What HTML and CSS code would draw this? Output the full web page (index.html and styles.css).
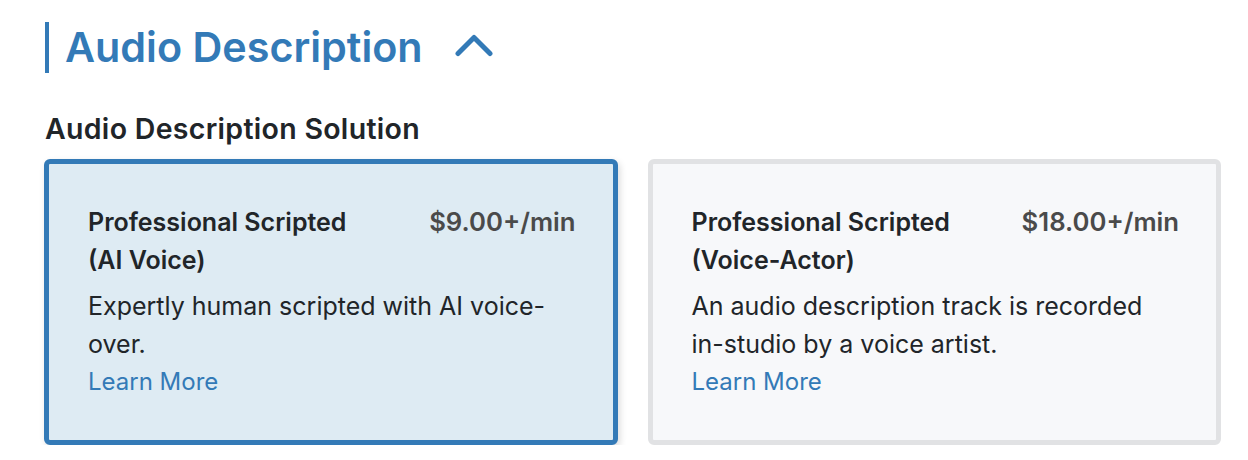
FILE: index.html
```html
<!DOCTYPE html>
<html lang="en">
<head>
<meta charset="utf-8">
<title>Audio Description</title>
<link rel="stylesheet" href="styles.css">
</head>
<body>
<section class="section">
  <header class="section-header">
    <h2 class="section-title">Audio Description</h2>
    <button class="toggle" aria-label="Collapse">
      <svg width="40" height="24" viewBox="0 0 40 24" aria-hidden="true">
        <polyline points="4,20.5 20,4.5 36,20.5" fill="none" stroke="#337ab7" stroke-width="5" stroke-linecap="round" stroke-linejoin="round"/>
      </svg>
    </button>
  </header>
  <h3 class="group-title">Audio Description Solution</h3>
  <div class="options">
    <div class="option option-selected">
      <div class="option-head">
        <div class="option-name">Professional Scripted (AI Voice)</div>
        <div class="option-price">$9.00+/min</div>
      </div>
      <p class="option-desc">Expertly human scripted with AI voice-over.</p>
      <a class="option-link" href="#">Learn More</a>
    </div>
    <div class="option">
      <div class="option-head">
        <div class="option-name">Professional Scripted (Voice-Actor)</div>
        <div class="option-price">$18.00+/min</div>
      </div>
      <p class="option-desc">An audio description track is recorded in-studio by a voice artist.</p>
      <a class="option-link" href="#">Learn More</a>
    </div>
  </div>
</section>
</body>
</html>
```
FILE: styles.css
```css
html, body {
  margin: 0;
  padding: 0;
  background: #ffffff;
}
body {
  font-family: Inter, "Noto Sans", sans-serif;
  color: #212529;
}
.section {
  padding: 22px 27px 0 44px;
}
.section-header {
  display: flex;
  align-items: center;
  border-left: 4px solid #337ab7;
  height: 51px;
  padding-left: 16px;
  margin-left: 1px;
}
.section-title {
  margin: 0;
  font-size: 41.3px;
  font-weight: 600;
  color: #337ab7;
  line-height: 51px;
}
.toggle {
  background: none;
  border: 0;
  padding: 0;
  margin: 0 0 6px 31px;
  display: flex;
  cursor: pointer;
}
.group-title {
  margin: 40px 0 0 1px;
  font-size: 28.5px;
  font-weight: 600;
  letter-spacing: 0.3px;
  line-height: 32px;
  color: #212529;
}
.options {
  display: grid;
  grid-template-columns: 1fr 1fr;
  gap: 30px;
  margin-top: 14px;
}
.option {
  border: 5px solid #e1e2e4;
  border-radius: 6px;
  background: #f7f8fa;
  padding: 39px 37px 39px 39px;
}
.option-selected {
  border-color: #337ab7;
  background: #deebf3;
  box-shadow: 2px 3px 7px rgba(0, 0, 0, 0.14);
}
.option-head {
  display: flex;
  justify-content: space-between;
  gap: 20px;
}
.option-name {
  font-size: 25px;
  font-weight: 600;
  line-height: 38px;
  max-width: 290px;
  color: #212529;
}
.option-price {
  font-size: 25.7px;
  font-weight: 600;
  line-height: 38px;
  color: #4a4a4a;
  white-space: nowrap;
}
.option-desc {
  margin: 8px 0 0;
  font-size: 25px;
  line-height: 38px;
  max-width: 470px;
}
.option-link {
  display: inline-block;
  font-size: 24px;
  line-height: 38px;
  color: #337ab7;
  text-decoration: none;
}
```
